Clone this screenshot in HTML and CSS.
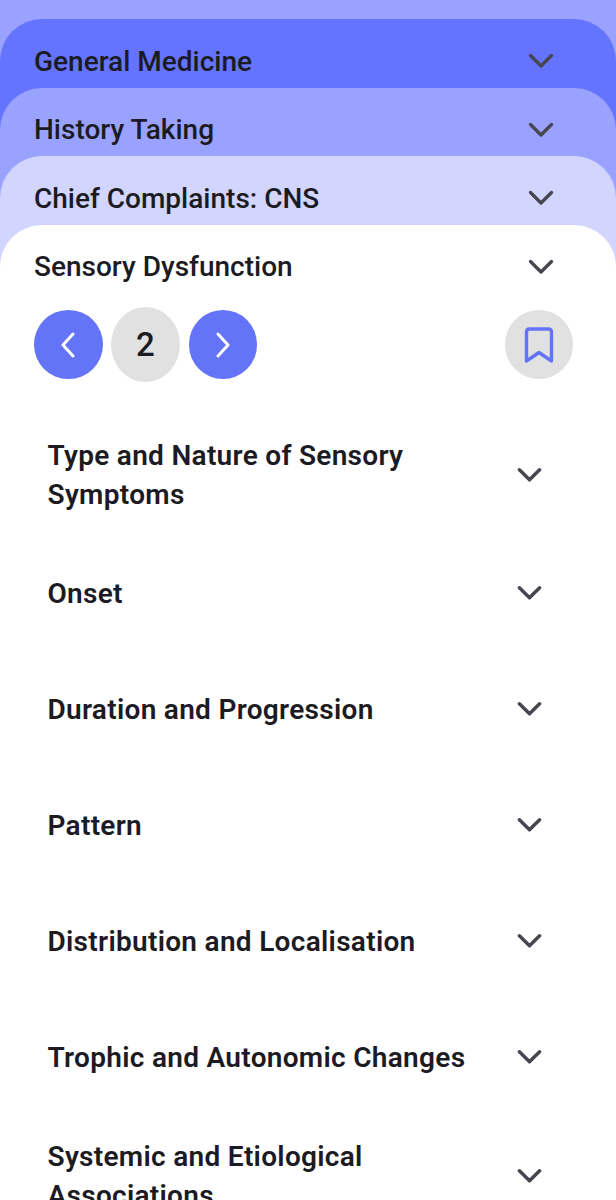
FILE: index.html
```html
<!DOCTYPE html>
<html lang="en">
<head>
    <meta charset="UTF-8">
    <meta name="viewport" content="width=device-width, initial-scale=1.0">
    <title>Sensory Dysfunction</title>
    <link rel="stylesheet" href="styles.css">
</head>
<body>
    <svg class="icon-defs" width="0" height="0">
        <symbol id="chevron" viewBox="0 0 26 16">
            <path d="M2.5 2.5L13 13L23.5 2.5" fill="none" stroke="currentColor" stroke-linecap="round" stroke-linejoin="round"/>
        </symbol>
    </svg>
    <div class="level level-1">
        <div class="level-head">
            <span>General Medicine</span>
            <svg class="chevron"><use href="#chevron"/></svg>
        </div>
        <div class="level level-2">
            <div class="level-head">
                <span>History Taking</span>
                <svg class="chevron"><use href="#chevron"/></svg>
            </div>
            <div class="level level-3">
                <div class="level-head">
                    <span>Chief Complaints: CNS</span>
                    <svg class="chevron"><use href="#chevron"/></svg>
                </div>
                <div class="level level-4">
                    <div class="level-head">
                        <span>Sensory Dysfunction</span>
                        <svg class="chevron"><use href="#chevron"/></svg>
                    </div>
                    <div class="pager">
                        <button class="round blue" type="button">
                            <svg width="16" height="26" viewBox="0 0 16 26"><path d="M13 2L3 13L13 24" fill="none" stroke="#fff" stroke-width="3" stroke-linecap="round" stroke-linejoin="round"/></svg>
                        </button>
                        <div class="page-num">2</div>
                        <button class="round blue" type="button">
                            <svg width="16" height="26" viewBox="0 0 16 26"><path d="M3 2L13 13L3 24" fill="none" stroke="#fff" stroke-width="3" stroke-linecap="round" stroke-linejoin="round"/></svg>
                        </button>
                        <button class="round grey bookmark" type="button">
                            <svg width="32" height="38" viewBox="0 0 32 38"><path d="M3.5 35V6Q3.5 3 6.5 3H25.5Q28.5 3 28.5 6V35L16 26.5Z" fill="none" stroke="#6474f8" stroke-width="3.4" stroke-linecap="round" stroke-linejoin="round"/></svg>
                        </button>
                    </div>
                    <div class="topics">
                        <div class="topic"><span>Type and Nature of Sensory Symptoms</span><svg class="chevron"><use href="#chevron"/></svg></div>
                        <div class="topic"><span>Onset</span><svg class="chevron"><use href="#chevron"/></svg></div>
                        <div class="topic"><span>Duration and Progression</span><svg class="chevron"><use href="#chevron"/></svg></div>
                        <div class="topic"><span>Pattern</span><svg class="chevron"><use href="#chevron"/></svg></div>
                        <div class="topic"><span>Distribution and Localisation</span><svg class="chevron"><use href="#chevron"/></svg></div>
                        <div class="topic"><span>Trophic and Autonomic Changes</span><svg class="chevron"><use href="#chevron"/></svg></div>
                        <div class="topic"><span>Systemic and Etiological Associations</span><svg class="chevron"><use href="#chevron"/></svg></div>
                    </div>
                </div>
            </div>
        </div>
    </div>
</body>
</html>
```

FILE: styles.css
```css
body {
    font-family: 'Roboto', sans-serif;
    background-color: #99a3ff;
    color: #1c1b23;
    margin: 0;
    padding: 19px 0 0 0;
    height: 1181px;
    overflow: hidden;
}

.icon-defs {
    display: block;
    height: 0;
}

.level {
    border-radius: 42px 42px 0 0;
}

.level-1 {
    background-color: #6474ff;
}

.level-2 {
    background-color: #99a3ff;
}

.level-3 {
    background-color: #d2d5fe;
}

.level-4 {
    background-color: #fff;
    height: 1000px;
}

.level-head {
    height: 68.5px;
    padding: 16px 62px 0 34px;
    display: flex;
    align-items: center;
    justify-content: space-between;
    box-sizing: border-box;
    font-size: 28px;
    font-weight: 500;
}

.chevron {
    width: 26px;
    height: 16px;
    flex-shrink: 0;
    color: #47464f;
    stroke-width: 3.3;
}

.pager {
    display: flex;
    align-items: center;
    gap: 8.5px;
    padding: 14px 43px 0 34px;
}

.round {
    width: 68.5px;
    height: 68.5px;
    padding: 0;
    border: none;
    border-radius: 50%;
    display: flex;
    align-items: center;
    justify-content: center;
}

.blue {
    background-color: #6474f8;
}

.grey {
    background-color: #e1e1e1;
}

.bookmark {
    margin-left: auto;
}

.page-num {
    width: 69px;
    height: 75px;
    border-radius: 50%;
    background-color: #e1e1e1;
    display: flex;
    align-items: center;
    justify-content: center;
    font-size: 33px;
    font-weight: 500;
}

.topics {
    padding-top: 32px;
}

.topic {
    min-height: 116px;
    padding: 21.5px 74px 21.5px 47.5px;
    display: flex;
    align-items: center;
    justify-content: space-between;
    box-sizing: border-box;
    font-size: 28px;
    font-weight: 600;
    line-height: 39px;
    letter-spacing: 0.3px;
}

.topic span {
    max-width: 425px;
}

.topic .chevron {
    width: 25px;
    stroke-width: 3.6;
}
```
